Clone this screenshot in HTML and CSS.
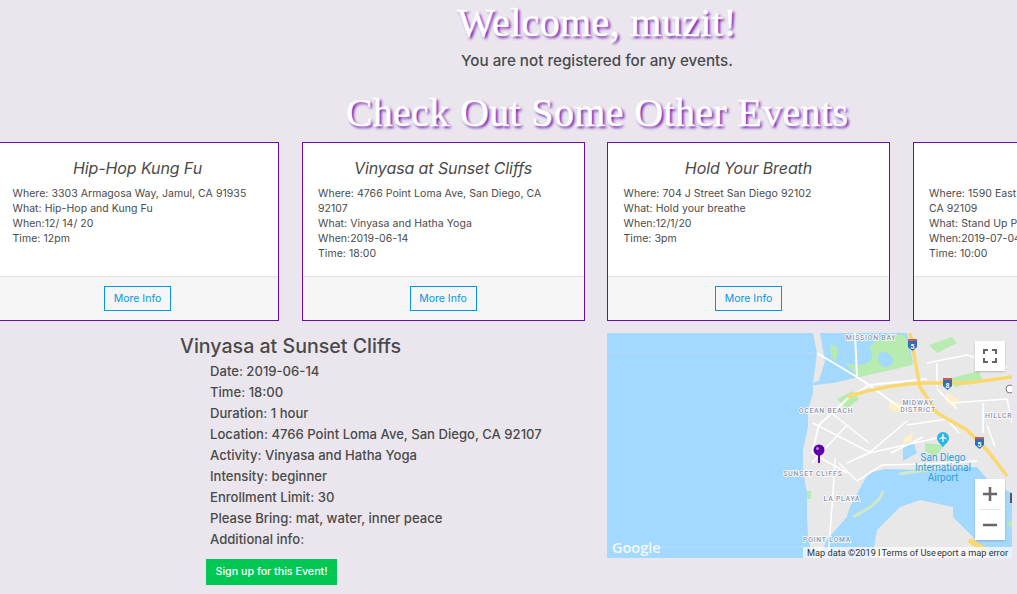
FILE: index.html
```html
<!DOCTYPE html>
<html lang="en">
  <head>
    <meta charset="UTF-8" />
    <meta name="viewport" content="width=device-width, initial-scale=1.0" />
    <title>Dashboard</title>
    <link rel="stylesheet" href="styles.css">
  </head>
  <body>
    <header class="welcome">
      <h1 class="fancy-title">Welcome, muzit!</h1>
      <p class="no-events">You are not registered for any events.</p>
      <h2 class="fancy-title other-title">Check Out Some Other Events</h2>
    </header>

    <section class="cards">
      <div class="card">
        <div class="card-body">
          <h3 class="card-title">Hip-Hop Kung Fu</h3>
          <p>Where: 3303 Armagosa Way, Jamul, CA 91935</p>
          <p>What: Hip-Hop and Kung Fu</p>
          <p>When:12/ 14/ 20</p>
          <p>Time: 12pm</p>
        </div>
        <div class="card-footer"><a href="#" class="btn-outline">More Info</a></div>
      </div>
      <div class="card">
        <div class="card-body">
          <h3 class="card-title">Vinyasa at Sunset Cliffs</h3>
          <p>Where: 4766 Point Loma Ave, San Diego, CA 92107</p>
          <p>What: Vinyasa and Hatha Yoga</p>
          <p>When:2019-06-14</p>
          <p>Time: 18:00</p>
        </div>
        <div class="card-footer"><a href="#" class="btn-outline">More Info</a></div>
      </div>
      <div class="card">
        <div class="card-body">
          <h3 class="card-title">Hold Your Breath</h3>
          <p>Where: 704 J Street San Diego 92102</p>
          <p>What: Hold your breathe</p>
          <p>When:12/1/20</p>
          <p>Time: 3pm</p>
        </div>
        <div class="card-footer"><a href="#" class="btn-outline">More Info</a></div>
      </div>
      <div class="card">
        <div class="card-body">
          <h3 class="card-title">SUP</h3>
          <p>Where: 1590 East Mission Bay Drive, San Diego, CA 92109</p>
          <p>What: Stand Up Paddle</p>
          <p>When:2019-07-04</p>
          <p>Time: 10:00</p>
        </div>
        <div class="card-footer"><a href="#" class="btn-outline">More Info</a></div>
      </div>
    </section>

    <section class="event-row">
      <div class="event-info">
        <h3 class="event-title">Vinyasa at Sunset Cliffs</h3>
        <ul class="event-details">
          <li>Date: 2019-06-14</li>
          <li>Time: 18:00</li>
          <li>Duration: 1 hour</li>
          <li>Location: 4766 Point Loma Ave, San Diego, CA 92107</li>
          <li>Activity: Vinyasa and Hatha Yoga</li>
          <li>Intensity: beginner</li>
          <li>Enrollment Limit: 30</li>
          <li>Please Bring: mat, water, inner peace</li>
          <li>Additional info:</li>
        </ul>
        <a href="#" class="btn-signup">Sign up for this Event!</a>
      </div>

      <div class="map">
        <svg class="map-canvas" viewBox="0 0 405 225" width="405" height="225">
          <rect width="405" height="225" fill="#a3d8ff" />
          <path d="M0 20H206" stroke="#b4dffc" stroke-width="1" />
          <path d="M0 214H196" stroke="#b4dffc" stroke-width="1" />
          <!-- land -->
          <path fill="#e8e8e8" d="M206 0 L210 20 L206 50 L206 60 L201 77 L201 94 L196 117 L196 137 L200 160 L200 184 L201 204 L206 225 H213 L220 207 L240 184 L243 174 L256 150 L262 140 L278 136 L320 137 L370 134 L383 150 L405 160 V0 Z" />
          <!-- mission bay -->
          <path fill="#a3d8ff" d="M213 0 H300 L306 30 L252 44 L226 50 L190 54 L212 48 L218 28 Z" />
          <path fill="#b7ebb0" d="M224 12 C232 10 232 24 228 28 C224 26 222 18 224 12 Z M238 30 C262 36 270 26 262 14 L276 2 L298 2 L306 32 L252 44 Z M230 66 L246 58 L252 66 L240 76 Z" />
          <path fill="#a3d8ff" d="M272 20 C280 16 290 26 284 32 C278 38 268 30 272 20 Z" />
          <path fill="#b7ebb0" d="M322 12 L345 4 L350 10 L330 20 Z M340 46 L372 38 L375 46 L348 54 Z M318 110 L338 112 L328 124 L318 118 Z" />
          <path fill="#fdf1c8" d="M282 66 L296 72 L292 80 L282 76 Z M298 104 L306 100 L304 112 L296 112 Z M340 60 L352 66 L348 74 L338 68 Z" />
          <!-- big bay and coronado -->
          <path fill="#a3d8ff" d="M262 140 C275 136 300 137 330 138 L370 134 L383 150 L405 160 V225 H213 L220 207 L240 184 L243 174 Z" />
          <path fill="#a3d8ff" d="M296 112 L306 108 L310 120 L296 128 Z" />
          <path fill="#e8e8e8" d="M265 225 L270 197 L293 174 L313 167 L346 174 L346 184 L366 204 L382 225 Z" />
          <path d="M246 184 C256 178 272 172 276 158" stroke="#cfe8c7" stroke-width="3" fill="none" />
          <path d="M292 141 L328 136" stroke="#cfe8c7" stroke-width="3" fill="none" />
          <path fill="#b7ebb0" d="M200 158 L204 158 L204 166 L200 166 Z M400 190 L405 186 V196 Z" />
          <!-- roads -->
          <g stroke="#ffffff" fill="none" stroke-width="1.500">
            <path d="M210 20 L250 44 L262 52 L300 80 M250 44 L248 0 M262 52 L240 66 L212 92 L205 120 M262 52 L320 46" stroke-width="2" />
            <path d="M206 90 L264 120 M222 78 L262 110 M240 92 L205 130 M300 88 L262 120 L240 130 M262 120 L330 105 M228 125 L226 160 L221 225" />
            <path d="M250 148 L275 132 L320 131 L370 128 M250 148 L232 130 M320 30 L360 22 L400 34 M330 30 L330 54 M344 70 L400 66 L405 90 M380 92 L388 114 M240 140 L205 120" />
            <path d="M300 92 L340 86 L352 100 M284 120 L316 104 M330 56 L350 76 M376 70 L376 100" />
          </g>
          <!-- freeways -->
          <g stroke="#fbd86f" fill="none" stroke-width="3.500">
            <path d="M303 0 L313 54 L330 80 L360 97 L380 117 L400 143" />
            <path d="M241 64 C262 56 290 52 313 50 L360 50 L405 44" />
            <path d="M362 207 L380 218" stroke-width="5" />
          </g>
          <g class="shield">
            <path d="M301 6h9v8l-4.500 4l-4.500-4z" fill="#2f6fb8" />
            <path d="M301 6h9v2h-9z" fill="#d9534f" />
            <text x="305.500" y="16" text-anchor="middle">5</text>
            <path d="M336 45h9v8l-4.500 4l-4.500-4z" fill="#2f6fb8" />
            <path d="M336 45h9v2h-9z" fill="#d9534f" />
            <text x="340.500" y="55" text-anchor="middle">8</text>
            <path d="M368 104h9v8l-4.500 4l-4.500-4z" fill="#2f6fb8" />
            <path d="M368 104h9v2h-9z" fill="#d9534f" />
            <text x="372.500" y="114" text-anchor="middle">5</text>
          </g>
          <rect x="403" y="160" width="2" height="10" fill="#555" />
          <circle cx="403" cy="56" r="4" fill="#fff" stroke="#777" />
          <!-- place names -->
          <g class="map-label">
            <text x="264" y="7" text-anchor="middle">MISSION BAY</text>
            <text x="311" y="72" text-anchor="middle">MIDWAY</text>
            <text x="311" y="79" text-anchor="middle">DISTRICT</text>
            <text x="219" y="80" text-anchor="middle">OCEAN BEACH</text>
            <text x="378" y="85">HILLCR</text>
            <text x="206" y="143" text-anchor="middle">SUNSET CLIFFS</text>
            <text x="235" y="168" text-anchor="middle">LA PLAYA</text>
            <text x="220" y="209" text-anchor="middle">POINT LOMA</text>
          </g>
          <g class="airport-label" text-anchor="middle">
            <text x="336" y="128">San Diego</text>
            <text x="336" y="138">International</text>
            <text x="336" y="148">Airport</text>
          </g>
          <path d="M336 99a6 6 0 0 1 6 6c0 3.500-3.500 6-6 9c-2.500-3-6-5.500-6-9a6 6 0 0 1 6-6z" fill="#2bb5ea" />
          <path d="M336 101v8M332.500 106l3.500-2l3.500 2" stroke="#fff" stroke-width="1.200" fill="none" />
          <!-- event marker -->
          <rect x="211" y="120" width="2" height="10" fill="#5f00a8" />
          <circle cx="212" cy="117" r="5.500" fill="#5f00a8" />
          <circle cx="210.500" cy="115.500" r="1.500" fill="#b78ad8" />
          <text class="map-logo" x="5" y="220">Google</text>
        </svg>

        <button class="map-btn map-fullscreen" aria-label="Fullscreen">
          <svg viewBox="0 0 14 14" width="14" height="14">
            <path d="M1 5V1H5M9 1H13V5M13 9V13H9M5 13H1V9" fill="none" stroke="#666" stroke-width="2" />
          </svg>
        </button>

        <div class="map-btn map-zoom">
          <svg viewBox="0 0 14 14" width="14" height="14"><path d="M0 7H14M7 0V14" stroke="#666" stroke-width="2.500" /></svg>
          <span class="zoom-line"></span>
          <svg viewBox="0 0 14 14" width="14" height="14"><path d="M0 7H14" stroke="#666" stroke-width="2.500" /></svg>
        </div>

        <div class="map-terms">
          <span>Map data ©2019 I</span>
          <span>Terms of Use</span>
          <span>eport a map error</span>
        </div>
      </div>
    </section>
  </body>
</html>
```

FILE: styles.css
```css
body {
  font-family: Inter, "Noto Sans", sans-serif;
  margin: 0;
  background-color: #ebe6ee;
  color: #4a4a4a;
  overflow-x: hidden;
}
h1, h2, h3, p, ul {
  margin: 0;
  padding: 0;
}
.welcome {
  padding-left: 177px;
  text-align: center;
}
.fancy-title {
  font-family: "Liberation Serif", serif;
  font-weight: 400;
  font-size: 40px;
  line-height: 46px;
  letter-spacing: 0.35px;
  color: #fff;
  -webkit-text-stroke: 0.5px #fff;
  text-shadow: 2px 2px 3px #6a0dad;
}
.no-events {
  font-size: 15.2px;
  font-weight: 500;
  line-height: 22px;
  margin-top: 4px;
}
.other-title {
  margin-top: 18px;
}
.cards {
  display: flex;
  gap: 22.5px;
  margin-left: -4px;
  margin-top: 6px;
  overflow: hidden;
}
.card {
  flex: none;
  width: 283px;
  height: 179px;
  box-sizing: border-box;
  display: flex;
  flex-direction: column;
  background-color: #fff;
  border: 1px solid #6a0dad;
}
.card-body {
  flex: 1;
  padding: 14px 15.5px 0;
  font-size: 10.5px;
  line-height: 15px;
  letter-spacing: 0.05px;
}
.card-title {
  font-size: 16px;
  font-style: italic;
  font-weight: 400;
  line-height: 22px;
  text-align: center;
  margin-bottom: 7px;
  letter-spacing: -0.1px;
}
.card-footer {
  height: 43px;
  display: flex;
  align-items: center;
  justify-content: center;
  background-color: #f5f5f5;
  border-top: 1px solid #e3e3e3;
}
.btn-outline {
  display: block;
  width: 67px;
  height: 25px;
  box-sizing: border-box;
  border: 1px solid #0099e0;
  color: #0099e0;
  font-size: 10.5px;
  line-height: 23px;
  text-align: center;
  text-decoration: none;
}
.event-row {
  display: flex;
  padding-left: 180px;
  margin-top: 12px;
}
.event-info {
  width: 427px;
}
.event-title {
  font-size: 19.6px;
  font-weight: 500;
  line-height: 26px;
  margin-bottom: 2px;
}
.event-details {
  list-style: none;
  margin-left: 30px;
  font-size: 13.1px;
  font-weight: 500;
  line-height: 21px;
}
.btn-signup {
  display: block;
  width: 131px;
  height: 26px;
  margin: 9px 0 0 26px;
  background-color: #00c853;
  color: #fff;
  font-size: 10.7px;
  font-weight: 500;
  line-height: 26px;
  text-align: center;
  text-decoration: none;
}
.map {
  position: relative;
  width: 405px;
  height: 225px;
  overflow: hidden;
}
.map-canvas {
  display: block;
}
.map-label text {
  font-family: Roboto, sans-serif;
  font-size: 6.8px;
  font-weight: 500;
  letter-spacing: 0.8px;
  fill: #8a93ad;
  stroke: #fff;
  stroke-width: 1.5px;
  paint-order: stroke;
}
.airport-label text {
  font-family: Roboto, sans-serif;
  font-size: 10px;
  fill: #2c9fdc;
}
.shield text {
  font-family: Roboto, sans-serif;
  font-size: 7px;
  font-weight: 700;
  fill: #fff;
}
.map-logo {
  font-family: "Open Sans", sans-serif;
  font-size: 14.5px;
  font-weight: 600;
  fill: #fff;
  opacity: 0.85;
}
.map-btn {
  position: absolute;
  left: 368px;
  width: 30px;
  background-color: #fff;
  border: none;
  padding: 0;
  display: flex;
  align-items: center;
  justify-content: center;
  box-shadow: 0 1px 2px rgba(0, 0, 0, 0.2);
}
.map-fullscreen {
  top: 8px;
  height: 30px;
}
.map-zoom {
  top: 146px;
  height: 61px;
  flex-direction: column;
  gap: 8px;
}
.zoom-line {
  width: 22px;
  height: 1px;
  background-color: #e6e6e6;
}
.map-terms {
  position: absolute;
  right: 0;
  bottom: 0;
  left: 196px;
  height: 11px;
  padding-left: 4px;
  display: flex;
  gap: 1px;
  background-color: rgba(255, 255, 255, 0.7);
  font-family: Roboto, sans-serif;
  font-size: 9.2px;
  line-height: 11px;
  color: #333;
  white-space: nowrap;
}
```
